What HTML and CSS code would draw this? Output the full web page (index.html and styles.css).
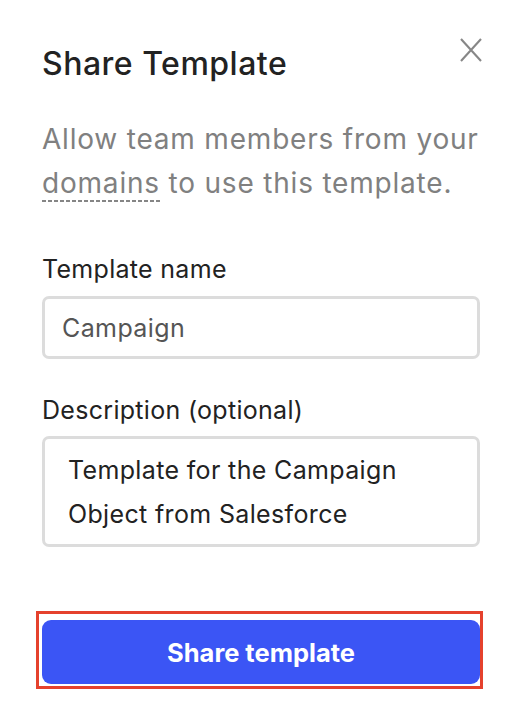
FILE: index.html
```html
<!DOCTYPE html>
<html>
<head>
<meta charset="utf-8">
<link rel="stylesheet" href="styles.css">
</head>
<body>
<div class="modal">
  <div class="header">
    <h1 class="title">Share Template</h1>
    <button class="close" aria-label="Close">
      <svg width="22" height="24" viewBox="0 0 22 24"><path d="M1 1 L21 23 M21 1 L1 23" stroke="#878787" stroke-width="2.1" fill="none"/></svg>
    </button>
  </div>
  <p class="desc">Allow team members from your <span class="dashed">domains</span> to use this template.</p>
  <label class="label">Template name</label>
  <div class="input">Campaign</div>
  <label class="label label2">Description (optional)</label>
  <div class="textarea">Template for the Campaign<br>Object from Salesforce</div>
  <div class="highlight">
    <button class="primary">Share template</button>
  </div>
</div>
</body>
</html>
```
FILE: styles.css
```css
html, body {
  margin: 0;
  padding: 0;
  background: #ffffff;
}
body {
  font-family: "Inter", "Open Sans", sans-serif;
  color: #222222;
}
.modal {
  padding: 0 46px 0 42px;
}
.header {
  display: flex;
  justify-content: space-between;
  align-items: flex-start;
  padding-top: 46px;
}
.title {
  margin: 0;
  font-size: 32px;
  font-weight: 500;
  letter-spacing: 0.5px;
  line-height: 36px;
  color: #222222;
  white-space: nowrap;
}
.close {
  border: 0;
  background: none;
  padding: 0;
  margin: -8px -2px 0 0;
  width: 22px;
  height: 24px;
  cursor: pointer;
}
.close svg { display: block; }
.desc {
  margin: 35px 0 0 0;
  font-size: 28px;
  letter-spacing: 0.8px;
  line-height: 44px;
  color: #808080;
}
.dashed {
  padding-bottom: 2px;
  background: linear-gradient(to right, #858585 65%, transparent 0) repeat-x left bottom / 6px 2px;
}
.label {
  display: block;
  margin-top: 49px;
  font-size: 25px;
  letter-spacing: 0.3px;
  line-height: 30px;
  color: #222222;
}
.input {
  margin-top: 12px;
  border: 3px solid #dcdcdc;
  border-radius: 7px;
  box-sizing: border-box;
  height: 63px;
  padding: 0 17px;
  display: flex;
  align-items: center;
  font-size: 25px;
  letter-spacing: 0.4px;
  color: #555555;
}
.label2 {
  margin-top: 36px;
}
.textarea {
  margin-top: 11px;
  border: 3px solid #dcdcdc;
  border-radius: 7px;
  box-sizing: border-box;
  height: 111px;
  padding: 9px 23px;
  font-size: 25px;
  letter-spacing: 0.35px;
  line-height: 44px;
  color: #222222;
}
.highlight {
  margin: 64px -3px 0 -6px;
  border: 3px solid #e5412d;
  padding: 6px 0 2px 3px;
}
.primary {
  display: block;
  width: 100%;
  height: 64px;
  border: 0;
  border-radius: 9px;
  background: #3b55f5;
  color: #ffffff;
  font-family: "Inter", "Open Sans", sans-serif;
  font-size: 25.5px;
  font-weight: 700;
}
```
